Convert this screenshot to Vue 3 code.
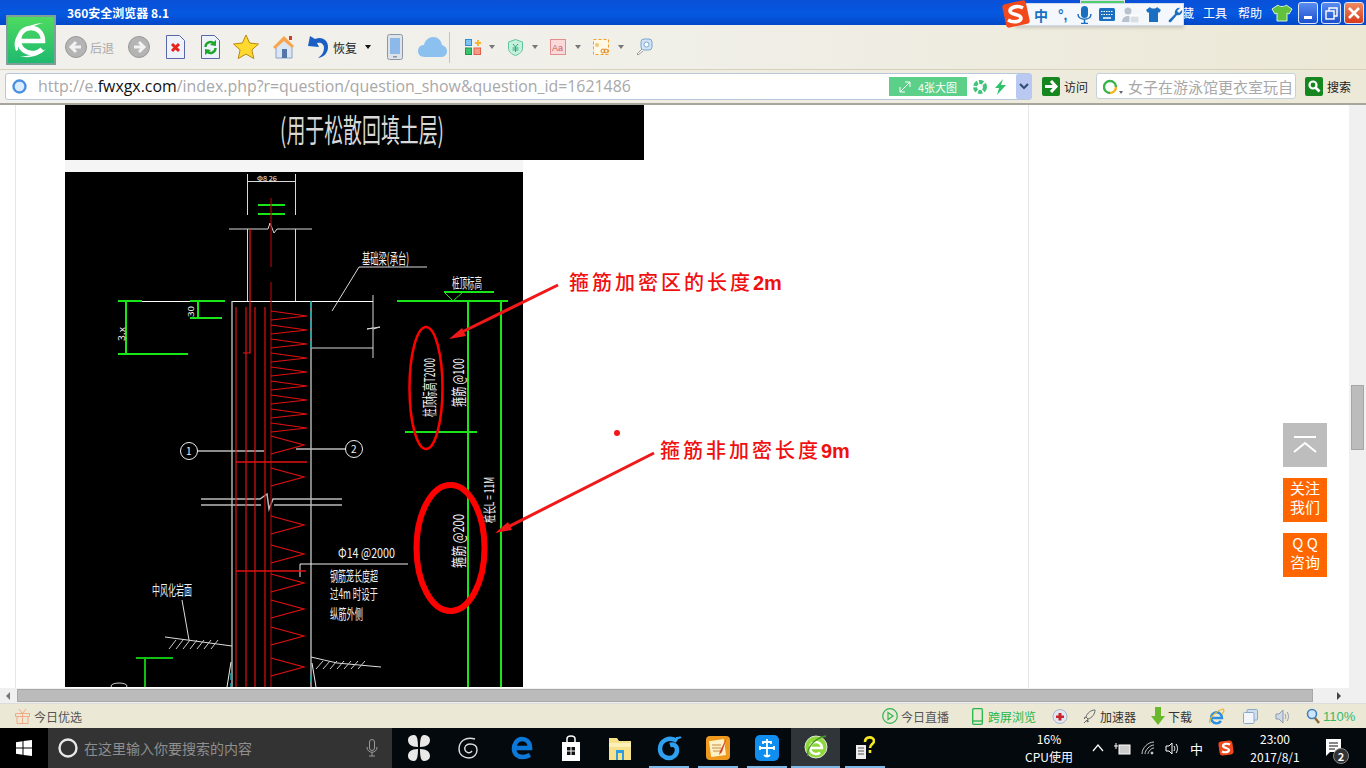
<template>
  <div class="screen">
    <!-- title bar -->
    <div class="titlebar">
      <span class="app-title">360安全浏览器 8.1</span>
      <div class="title-right">
        <span class="menu">收藏</span>
        <span class="menu">工具</span>
        <span class="menu last">帮助</span>
        <svg class="skin" width="22" height="18" viewBox="0 0 22 18">
          <path d="M7 1 1 5l3 5 2-1v8h10V9l2 1 3-5-6-4c-1 2-7 2-8 0z" fill="#5fc13c" stroke="#dff3d0" />
        </svg>
        <div class="win-btn">
          <svg width="20" height="22" viewBox="0 0 20 22"><rect x="6" y="14" width="8" height="3" fill="#fff" /></svg>
        </div>
        <div class="win-btn">
          <svg width="20" height="22" viewBox="0 0 20 22" fill="none" stroke="#fff" stroke-width="1.4"><rect x="5" y="9" width="8" height="8" /><path d="M8 9V6h8v8h-3" /></svg>
        </div>
        <div class="win-btn close">
          <svg width="20" height="22" viewBox="0 0 20 22" stroke="#fff" stroke-width="2.6"><path d="m5 6 10 10M15 6 5 16" /></svg>
        </div>
      </div>
    </div>

    <!-- toolbar -->
    <div class="toolbar">
      <svg class="back" width="22" height="24" viewBox="0 0 22 24">
        <circle cx="11" cy="12" r="10.5" fill="#b4b4b4" stroke="#989898" />
        <path d="M16 12H7m4-5-5 5 5 5" fill="none" stroke="#f2f2f2" stroke-width="3" />
      </svg>
      <span class="back-label">后退</span>
      <svg class="fwd" width="22" height="24" viewBox="0 0 22 24">
        <circle cx="11" cy="12" r="10.5" fill="#b4b4b4" stroke="#989898" />
        <path d="M6 12h9m-4-5 5 5-5 5" fill="none" stroke="#f2f2f2" stroke-width="3" />
      </svg>
      <svg class="doc-stop" width="19" height="24" viewBox="0 0 19 24">
        <path d="M.5.5h13l5 5v18H.5z" fill="#eef2fb" stroke="#5a66a8" />
        <path d="m6 9 7 7m0-7-7 7" stroke="#e8231a" stroke-width="3" />
      </svg>
      <svg class="doc-refresh" width="19" height="24" viewBox="0 0 19 24">
        <path d="M.5.5h13l5 5v18H.5z" fill="#eef2fb" stroke="#5a66a8" />
        <path d="M4.500 12a5 5 0 0 1 8.500-3.500M14.500 13a5 5 0 0 1-8.500 3.500" fill="none" stroke="#1fa52a" stroke-width="2.400" />
        <path d="m15 5 0 6-6-1zM4 20l0-6 6 1z" fill="#1fa52a" />
      </svg>
      <svg class="star" width="26" height="26" viewBox="0 0 26 26">
        <path d="m13 1 3.6 8 8.9 1-6.6 5.9 1.9 8.7L13 20.100l-7.800 4.500 1.900-8.700L.5 10l8.900-1z" fill="#ffd92e" stroke="#b98a12" />
      </svg>
      <svg class="home" width="24" height="24" viewBox="0 0 24 24">
        <path d="M4 11v12h16V11l-8-7z" fill="#dbe6f5" stroke="#8aa2c6" />
        <path d="M1 12 12 1l10 10-2 2-8-7-9 8z" fill="#f6a54a" />
        <rect x="10" y="14" width="5" height="9" fill="#5577a8" />
        <rect x="17" y="1" width="3" height="4" fill="#c8402a" />
      </svg>
      <svg class="undo" width="22" height="24" viewBox="0 0 22 24">
        <path d="M8 4c7-3 13 1 13 8 0 6-4 10-10 11 4-3 6-6 6-10 0-4-3-6-7-5l2 4L1 11l2-10z" fill="#1b5fc4" />
      </svg>
      <span class="tool-label">恢复</span>
      <i class="caret dark"></i>
      <svg class="phone" width="16" height="26" viewBox="0 0 16 26">
        <rect x=".5" y=".5" width="15" height="25" rx="2" fill="#dfe3e8" stroke="#8a97a6" />
        <rect x="3" y="4" width="10" height="16" fill="#8db8ea" />
        <rect x="6" y="22" width="4" height="1.500" fill="#8a97a6" />
      </svg>
      <svg class="cloud" width="29" height="22" viewBox="0 0 29 22">
        <path d="M7 21C2 21 0 18 0 15c0-4 3-6 6-6 1-5 5-8 9-8 5 0 8 3 9 8 3 1 5 3 5 6 0 4-3 6-6 6z" fill="#8cc0ef" />
      </svg>
      <i class="tool-sep"></i>
      <svg class="apps" width="16" height="16" viewBox="0 0 16 16">
        <rect x=".5" y=".5" width="6" height="6" fill="#7cc4f5" stroke="#2e8ed8" />
        <rect x=".5" y="9" width="6" height="6.500" fill="#39c46a" stroke="#1d9a4a" />
        <rect x="9" y="9" width="6.500" height="6.500" fill="#f79a88" stroke="#e0604a" />
        <path d="M10 3h2V1h2v2h2v2h-2v2h-2V5h-2z" fill="#f5b62d" />
      </svg>
      <i class="caret c-apps"></i>
      <svg class="shield" width="15" height="17" viewBox="0 0 15 17">
        <path d="M7.500.5 14.500 3v6c0 4-3 6-7 7.500C3.500 15 .5 13 .5 9V3z" fill="#c4f0dc" stroke="#5fc49a" />
        <path d="m5 5 2.500 3L10 5M4.500 9h6M4.500 11h6M7.500 8v5" fill="none" stroke="#2ea873" />
      </svg>
      <i class="caret c-next"></i>
      <svg class="fontbox" width="16" height="16" viewBox="0 0 16 16">
        <rect x=".5" y=".5" width="15" height="15" fill="#fbd9d9" stroke="#e48f8f" />
        <text x="2" y="12" font-size="9" fill="#c8605f" font-family="Liberation Sans, sans-serif">Aa</text>
      </svg>
      <i class="caret c-next"></i>
      <svg class="shot" width="16" height="16" viewBox="0 0 16 16">
        <rect x=".5" y=".5" width="15" height="15" fill="#fff8e4" stroke="#f0a030" stroke-dasharray="3 2" />
        <circle cx="4" cy="6" r="2" fill="#f2c777" />
        <circle cx="10" cy="12" r="2" fill="none" stroke="#d8841e" />
        <circle cx="13" cy="12" r="2" fill="none" stroke="#d8841e" />
      </svg>
      <i class="caret c-next"></i>
      <svg class="lens" width="17" height="18" viewBox="0 0 17 18">
        <rect x="5" y="1" width="11" height="11" rx="3" fill="#cfe3f5" stroke="#7da6cc" />
        <circle cx="10.500" cy="6.500" r="2.500" fill="#fff" stroke="#7da6cc" />
        <path d="m6 11-5 5 1 1 5-4" fill="#fff" stroke="#999" />
      </svg>
    </div>

    <!-- address bar -->
    <div class="addressbar">
      <div class="url-box">
        <svg class="globe" width="15" height="15" viewBox="0 0 15 15">
          <circle cx="7.500" cy="7.500" r="6" fill="#dcecff" stroke="#4a90e2" stroke-width="2.400" />
        </svg>
        <span class="url">http://e.<b>fwxgx.com</b>/index.php?r=question/question_show&amp;question_id=1621486</span>
        <div class="big-pic">
          <svg width="12" height="12" viewBox="0 0 12 12" fill="none" stroke="#fff"><path d="M1 11 11 1M6 1h5v5M1 6v5h5" /></svg>
          <span>4张大图</span>
        </div>
        <svg class="shutter" width="14" height="14" viewBox="0 0 14 14">
          <circle cx="7" cy="7" r="5" fill="none" stroke="#3fc47a" stroke-width="4" stroke-dasharray="4 1.500" />
        </svg>
        <svg class="bolt" width="13" height="16" viewBox="0 0 13 16"><path d="M9 0 1 9h4l-2 7 9-10H7z" fill="#2ec36a" /></svg>
        <div class="url-drop">
          <svg width="10" height="8" viewBox="0 0 10 8"><path d="m1 1 4 4 4-4" fill="none" stroke="#33507a" stroke-width="2.200" /></svg>
        </div>
      </div>
      <svg class="go" width="18" height="19" viewBox="0 0 18 19">
        <rect width="18" height="19" rx="2" fill="#16861f" />
        <path d="M3 9.500h10M9 4l5 5.500L9 15" fill="none" stroke="#fff" stroke-width="3" />
      </svg>
      <span class="addr-label">访问</span>
      <div class="search-box">
        <svg width="22" height="18" viewBox="0 0 22 18">
          <path d="M7 16a6 6 0 1 1 6-6" fill="none" stroke="#37b54a" stroke-width="2.400" />
          <path d="M13 10a6 6 0 0 1-6 6" fill="none" stroke="#f5b51e" stroke-width="2.400" />
          <path d="m16 14 4 0-2 3z" fill="#666" />
        </svg>
        <span class="search-text">女子在游泳馆更衣室玩自</span>
      </div>
      <svg class="search-go" width="18" height="19" viewBox="0 0 18 19">
        <rect width="18" height="19" rx="2" fill="#16861f" />
        <circle cx="8" cy="8" r="3.500" fill="none" stroke="#fff" stroke-width="2.200" />
        <path d="m10.500 10.500 4 4" stroke="#fff" stroke-width="2.600" />
      </svg>
      <span class="addr-label">搜索</span>
    </div>

    <!-- page -->
    <div class="viewport">
      <div class="page">
        <div class="sheet">
          <div class="band">
            <svg width="579" height="55" viewBox="65 105 579 55">
              <text x="280" y="142" class="band-title" textLength="164" lengthAdjust="spacingAndGlyphs">(用于松散回填土层)</text>
            </svg>
          </div>
          <div class="gap-strip"></div>
          <svg class="drawing" width="800" height="515" viewBox="65 172 800 515">
            <rect x="65" y="172" width="458" height="515" fill="#000" />

            <!-- column above the cap -->
            <g fill="none" stroke="#d8d8d8" stroke-width="1">
              <path d="M247 174v41M295 174v41M247 181h48" shape-rendering="crispEdges" />
              <path d="M229 229h39l2-6 4 10 3-4h35" />
              <path d="M247 229v72M295 229v72" shape-rendering="crispEdges" />
              <path d="M142 301h83M232 301h141" stroke="#fff" shape-rendering="crispEdges" />
              <path d="M373 295v33l-6 1 13-2-7 2v29M311 348h62" />
              <path d="M232 301v386M311 301v386" stroke="#c8c8c8" stroke-width="1.300" />
              <path d="M359 267h68M359 267l-27 44" />
              <path d="M201 499h59l7-5 2 15 4-10h69M201 505h60M274 505h68" stroke="#bbb" stroke-width="1.500" />
              <path d="M197 451h67M296 449h50" stroke="#bbb" stroke-width="1.500" />
              <circle cx="189" cy="451" r="8.500" stroke="#eee" />
              <circle cx="354" cy="449" r="8.500" stroke="#eee" />
              <path d="M300 577v-13h108" stroke="#eee" />
              <path d="m182 600 7 40M165 637l67 9M311 657l26 6 44 4" stroke="#ddd" />
              <path d="m231 662-4 25M312 663l4 24" stroke="#eee" />
              <ellipse cx="119" cy="686" rx="8" ry="3" stroke="#ccc" />
            </g>
            <path v-for="(h, i) in hatches" :key="'h' + i" :d="h" stroke="#ccc" stroke-width="1" />
            <path d="M311 301v47M231 673v14M311 675v10" stroke="#1aa" stroke-width="1.500" stroke-dasharray="7 3" fill="none" />

            <!-- green dimensions -->
            <g fill="none" stroke="#19e619" stroke-width="1.500" shape-rendering="crispEdges">
              <path d="M258 205h27M258 214h27" />
              <path d="M118 301h24M126 301v53M118 354h70M198 301v17M190 318h32M190 301h35" />
              <path d="M397 301h111M444 292h50" />
              <path d="M468 301v386M501 301v386M405 432h72" />
              <path d="M136 658h37M145 658v29" stroke="#10c010" />
            </g>
            <path d="m444 292 9 9 10-9" fill="none" stroke="#19e619" />

            <!-- rebar -->
            <g fill="none" stroke="#e01010" stroke-width="1.200">
              <path d="M250 229v124h-7" stroke="#f01818" />
              <path d="M236 307v380M246 307v380M255 307v380M265 307v380" />
              <path d="M271 198v69M271 282v405" stroke="#a00808" />
              <path d="M236 462h71M236 571h70" stroke-width="1.500" />
              <polyline v-for="(p, i) in dense" :key="'d' + i" :points="p" />
              <polyline v-for="(p, i) in sparse" :key="'s' + i" :points="p" />
            </g>

            <!-- drawing notes -->
            <g class="cad">
              <text x="257" y="181" font-size="7" textLength="20" lengthAdjust="spacingAndGlyphs">Φ8 26</text>
              <text x="362" y="264" font-size="15" textLength="47" lengthAdjust="spacingAndGlyphs">基础梁(承台)</text>
              <text x="452" y="288" font-size="14" textLength="30" lengthAdjust="spacingAndGlyphs">桩顶标高</text>
              <text x="338" y="558" font-size="14" textLength="57" lengthAdjust="spacingAndGlyphs">Φ14 @2000</text>
              <text x="330" y="581" font-size="14" textLength="48" lengthAdjust="spacingAndGlyphs">钢筋笼长度超</text>
              <text x="330" y="599" font-size="14" textLength="48" lengthAdjust="spacingAndGlyphs">过4m 时设于</text>
              <text x="330" y="619" font-size="14" textLength="33" lengthAdjust="spacingAndGlyphs">纵筋外侧</text>
              <text x="152" y="595" font-size="14" textLength="40" lengthAdjust="spacingAndGlyphs">中风化岩面</text>
              <text x="186" y="455" font-size="10">1</text>
              <text x="351" y="453" font-size="10">2</text>
              <text transform="translate(194 317) rotate(-90)" font-size="8" textLength="11" lengthAdjust="spacingAndGlyphs">30</text>
              <text transform="translate(125 341) rotate(-90)" font-size="9" textLength="14" lengthAdjust="spacingAndGlyphs">3.x</text>
              <text transform="translate(435 417) rotate(-90)" font-size="15" textLength="59" lengthAdjust="spacingAndGlyphs">桩顶标高T2000</text>
              <text transform="translate(464 407) rotate(-90)" font-size="15" textLength="49" lengthAdjust="spacingAndGlyphs">箍筋 @100</text>
              <text transform="translate(464 568) rotate(-90)" font-size="15" textLength="54" lengthAdjust="spacingAndGlyphs">箍筋 @200</text>
              <text transform="translate(494 523) rotate(-90)" font-size="13" textLength="46" lengthAdjust="spacingAndGlyphs">桩长L = 11M</text>
            </g>

            <!-- red markup on the drawing -->
            <ellipse cx="426" cy="388" rx="16.500" ry="61" fill="none" stroke="#f00" stroke-width="2.500" />
            <ellipse cx="450.500" cy="548" rx="34" ry="63" fill="none" stroke="#f00" stroke-width="6" />
            <path d="m558 285-100 49" stroke="#f01818" stroke-width="3" />
            <path d="m449 339 13-11 4 8z" fill="#f01818" />
            <path d="m654 453-148 75" stroke="#f01818" stroke-width="3" />
            <path d="m495 533 13-11 4 8z" fill="#f01818" />
            <circle cx="617" cy="433" r="3" fill="#f01818" />
            <text x="569" y="290" class="note">箍筋加密区的长度<tspan class="note-num">2m</tspan></text>
            <text x="660" y="458" class="note">箍筋非加密长度<tspan class="note-num">9m</tspan></text>
          </svg>
        </div>
      </div>
      <div class="v-scroll"><div class="v-thumb"></div></div>

      <div class="float-tools">
        <div class="to-top">
          <svg width="44" height="44" viewBox="0 0 44 44" fill="none" stroke="#fff" stroke-width="2">
            <path d="M11 14h22M11 29l11-9 11 9" />
          </svg>
        </div>
        <div class="float-btn">关注<br />我们</div>
        <div class="float-btn">Q Q<br />咨询</div>
      </div>
    </div>

    <!-- horizontal scrollbar -->
    <div class="h-scroll">
      <i class="arrow-left"></i>
      <div class="h-thumb"></div>
      <i class="arrow-right"></i>
    </div>

    <!-- status bar -->
    <div class="statusbar">
      <svg class="gift" width="15" height="16" viewBox="0 0 15 16" fill="none" stroke="#f3a983">
        <path d="M.5 5.500h14v3H.5zM2 8.500h11v7H2zM7.500 5.500v10M7.500 5.500 4 1M7.500 5.500 11 1" />
      </svg>
      <span class="st-label first">今日优选</span>
      <div class="st-right">
        <svg width="16" height="16" viewBox="0 0 16 16" fill="none" stroke="#2fb553" stroke-width="1.200">
          <circle cx="8" cy="8" r="7.300" /><path d="m6 4.500 5 3.500-5 3.500z" />
        </svg>
        <span class="st-label live">今日直播</span>
        <svg class="st-phone" width="11" height="17" viewBox="0 0 11 17" fill="none" stroke="#22b84a" stroke-width="1.300">
          <rect x=".7" y=".7" width="9.600" height="15.600" rx="1" /><path d="M.7 13h9.600" />
        </svg>
        <span class="st-label cross">跨屏浏览</span>
        <svg class="st-med" width="16" height="17" viewBox="0 0 16 17">
          <circle cx="8" cy="8.500" r="7" fill="#e2e8f2" stroke="#a8b4cc" />
          <path d="M6.500 5h3v2.500H12v2.500H9.500v2.500h-3V10H4V7.500h2.500z" fill="#c8262a" />
        </svg>
        <svg class="st-rocket" width="13" height="15" viewBox="0 0 13 15" fill="none" stroke="#666">
          <path d="M12 1C8 1 4 4 3 8l2 2c4-1 7-5 7-9zM3 8 1 9l1 1M5 10l-1 3 2-1M1 14l3-3" />
        </svg>
        <span class="st-label speed">加速器</span>
        <svg class="st-down" width="14" height="18" viewBox="0 0 14 18"><path d="M4 0h6v9h4l-7 9-7-9h4z" fill="#6ab82c" /></svg>
        <span class="st-label dl">下载</span>
        <svg class="st-ie" width="17" height="17" viewBox="0 0 17 17">
          <path d="M3 10h11a5.500 5.500 0 1 0-1 3" fill="none" stroke="#2a8fe0" stroke-width="2.400" />
          <path d="M2 15C0 12 7 3 15 1c2 1 0 4-1 5" fill="none" stroke="#f0b72c" stroke-width="1.200" />
        </svg>
        <svg class="st-win" width="15" height="15" viewBox="0 0 15 15">
          <rect x="4" y=".5" width="10.500" height="10.500" rx="1" fill="#d0dff0" stroke="#8aa8c8" />
          <rect x=".5" y="3.500" width="10.500" height="11" rx="1" fill="#f2f6fb" stroke="#8aa8c8" />
        </svg>
        <svg class="st-spk" width="15" height="15" viewBox="0 0 15 15" fill="none">
          <path d="M1 5h3l4-4v13l-4-4H1z" fill="#cfd8e4" stroke="#8b9bb0" />
          <path d="M10 5c1 2 1 3 0 5M12 3c2 3 2 6 0 9" stroke="#8b9bb0" />
        </svg>
        <svg class="st-zoom" width="14" height="16" viewBox="0 0 14 16">
          <circle cx="6" cy="6" r="4.500" fill="#cfe5fa" stroke="#3e7fc4" stroke-width="1.600" />
          <path d="m9 10 4 5" stroke="#8a6a3e" stroke-width="2.400" />
        </svg>
        <span class="st-pct">110%</span>
      </div>
    </div>

    <!-- taskbar -->
    <div class="taskbar">
      <div class="start">
        <svg width="16" height="16" viewBox="0 0 16 16" fill="#fff">
          <path d="M0 2.200 6.500 1.300v6.200H0zM7.500 1.100 16 0v7.500H7.500zM0 8.500h6.500v6.200L0 13.800zM7.500 8.500H16V16l-8.500-1.100z" />
        </svg>
      </div>
      <div class="cortana">
        <svg width="22" height="22" viewBox="0 0 22 22"><circle cx="11" cy="11" r="8.500" fill="none" stroke="#e8e8e8" stroke-width="2.400" /></svg>
        <span class="cortana-text">在这里输入你要搜索的内容</span>
        <svg class="mic" width="12" height="18" viewBox="0 0 12 18" fill="none" stroke="#999">
          <rect x="3.500" y=".5" width="5" height="11" rx="2.500" /><path d="M1 8c0 7 10 7 10 0M6 13v4M3 17h6" />
        </svg>
      </div>
      <div class="task-icons">
        <div class="task-item">
          <svg width="22" height="26" viewBox="0 0 22 26" fill="#e8e8e8">
            <path d="M10 12C3 12 0 9 0 5s4-5 6-5c3 0 4 4 4 12zM12 12c0-8 1-12 4-12 2 0 6 1 6 5s-3 7-10 7zM10 14c0 8-1 12-4 12-2 0-6-1-6-5s3-7 10-7zM12 14c7 0 10 3 10 7s-4 5-6 5c-3 0-4-4-4-12z" />
          </svg>
        </div>
        <div class="task-item spaced">
          <svg width="22" height="24" viewBox="0 0 22 24" fill="none" stroke="#ddd" stroke-width="1.400">
            <path d="M18 3C8 0 2 6 2 13c0 6 5 9 10 9s8-4 8-8-3-6-7-6-6 3-5 6 5 4 7 1" />
          </svg>
        </div>
        <div class="task-item">
          <svg width="22" height="24" viewBox="0 0 22 24" fill="none" stroke="#0c78d8" stroke-width="4.600">
            <path d="M4 12h15C19 6 15 3 11 3 6 3 3 8 3 13s4 8 9 8c3 0 5-1 7-2" />
          </svg>
        </div>
        <div class="task-item">
          <svg width="20" height="26" viewBox="0 0 20 26">
            <path d="M1 7h18v19H1z" fill="#fff" />
            <path d="M6 8V4c0-4 8-4 8 0v4" fill="none" stroke="#fff" stroke-width="1.500" />
            <path d="M6 12h3.500v3.500H6zm4.500 0H14v3.500h-3.500zM6 16.500h3.500V20H6zm4.500 0H14V20h-3.500z" fill="#111" />
          </svg>
        </div>
        <div class="task-item">
          <svg width="22" height="24" viewBox="0 0 22 24">
            <path d="M0 2h8l2 3h12v19H0z" fill="#f7e08a" />
            <rect y="7" width="22" height="4" fill="#fdf0b8" />
            <path d="M7 14h8v10H7z" fill="#2f9be0" />
            <rect x="9" y="17" width="4" height="7" fill="#f7e08a" />
          </svg>
        </div>
        <div class="task-item running">
          <svg width="26" height="26" viewBox="0 0 26 26" fill="none" stroke="#2f9ff0" stroke-width="4.500">
            <path d="M21 6C14 1 4 5 4 14c0 6 5 9 9 9s8-3 8-8-4-6-7-5" />
            <path d="M20 3c2 0 4 0 5-1" stroke-width="2" />
          </svg>
        </div>
        <div class="task-item running">
          <svg width="24" height="24" viewBox="0 0 24 24">
            <rect width="24" height="24" rx="4" fill="#ef9a1f" />
            <rect x="4" y="4" width="15" height="16" fill="#fdf1c8" transform="rotate(-8 12 12)" />
            <path d="M6 9h9M6 12h9M7 15h7" stroke="#c98a3a" />
            <path d="m21 1-7 14-1 4 3-3z" fill="#d8442a" />
          </svg>
        </div>
        <div class="task-item running">
          <svg width="24" height="26" viewBox="0 0 24 26">
            <rect width="24" height="26" rx="5" fill="#0f8ef0" />
            <path d="M12 4v18M8 9V7h8v2M5 13h14M5 11v4M19 11v4M9 20c2 2 4 2 6 0" fill="none" stroke="#fff" stroke-width="1.800" />
          </svg>
        </div>
        <div class="task-item active">
          <svg width="24" height="24" viewBox="0 0 24 24">
            <circle cx="12" cy="12" r="11" fill="#8fd83c" stroke="#dfe8d8" />
            <path d="M6 13h12a6 6 0 1 0-2 4.500" fill="none" stroke="#fff" stroke-width="2.400" />
            <path d="M4 21C2 14 10 3 22 1" fill="none" stroke="#4a9a1e" stroke-width="1.400" />
          </svg>
        </div>
        <div class="task-item running">
          <svg width="20" height="24" viewBox="0 0 20 24">
            <rect x="1" y="9" width="10" height="14" fill="#eee" />
            <path d="M3 12h6M3 15h6M3 18h6" stroke="#555" />
            <path d="M10 6c0-6 9-6 9-1 0 3-4 3-4 7M15 14v3" fill="none" stroke="#f5e81e" stroke-width="2.600" />
          </svg>
        </div>
      </div>
      <div class="cpu">
        <span>16%</span>
        <span>CPU使用</span>
      </div>
      <div class="tray">
        <svg class="t-up" width="12" height="8" viewBox="0 0 12 8"><path d="m1 7 5-6 5 6" fill="none" stroke="#fff" stroke-width="1.200" /></svg>
        <svg class="t-bat" width="17" height="13" viewBox="0 0 17 13" fill="none" stroke="#fff">
          <rect x="5" y="3" width="11" height="9" fill="#ccc" /><path d="M0 4h4M2 1v6" />
        </svg>
        <svg class="t-wifi" width="14" height="14" viewBox="0 0 14 14" fill="none" stroke="#ccc">
          <path d="M1 13C1 7 7 1 13 1M4 13c0-4 5-9 9-9M7 13c0-2 3-6 6-6" /><circle cx="11" cy="12" r="1" fill="#fff" />
        </svg>
        <svg class="t-spk" width="15" height="15" viewBox="0 0 15 15" fill="none" stroke="#fff">
          <path d="M1 5h3l3-3v11l-3-3H1zM9 5c1 2 1 3 0 5M11 3c2 3 2 6 0 9" />
        </svg>
        <span class="t-ime">中</span>
        <svg class="t-s" width="16" height="16" viewBox="0 0 16 16">
          <rect x="1" y="1" width="14" height="14" rx="3" fill="#f2491c" transform="rotate(-8 8 8)" />
          <path d="M12 4.500C9 3 5 4 5 6s6 2 6 4-4 3-7 1.500" fill="none" stroke="#fff" stroke-width="2.200" />
        </svg>
      </div>
      <div class="clock">
        <span>23:00</span>
        <span>2017/8/1</span>
      </div>
      <div class="notify">
        <svg width="20" height="20" viewBox="0 0 20 20">
          <path d="M1 1h15v13H5l-4 4z" fill="#fff" />
          <path d="M4 5h9M4 8h9M4 11h6" stroke="#111" />
        </svg>
        <span class="badge">2</span>
      </div>
    </div>

    <!-- overlays across the chrome -->
    <svg class="logo" width="50" height="50" viewBox="0 0 50 50">
      <defs>
        <linearGradient id="logoBg" x1="0" y1="0" x2="0" y2="1">
          <stop offset="0" stop-color="#4edb60" />
          <stop offset="1" stop-color="#1fb96f" />
        </linearGradient>
      </defs>
      <rect x="1" y="1" width="48" height="48" fill="url(#logoBg)" stroke="#7f9f9a" stroke-width="2" />
      <path d="M13 26h24c0-8-5-13-12-13s-12 5-12 12c0 8 6 13 13 13 4 0 7-1 10-4" fill="none" stroke="#fff" stroke-width="4.500" />
      <path d="M10 36C4 20 20 8 39 8 27 9 12 19 12 31c0 3 1 4-2 5zM14 41c8 3 20 0 26-7-6 4-18 8-26 7z" fill="#fff" />
    </svg>
    <div class="ime-tab"></div>
    <div class="ime">
      <span class="ime-cn">中</span>
      <span class="ime-punct">°,</span>
      <svg width="15" height="18" viewBox="0 0 15 18" fill="#1a6fc0">
        <rect x="4" y="0" width="7" height="12" rx="3.500" /><path d="M1 8c0 7 13 7 13 0M7.500 14v3M4 17.500h7" fill="none" stroke="#1a6fc0" stroke-width="1.500" />
      </svg>
      <svg width="16" height="13" viewBox="0 0 16 13">
        <rect width="16" height="13" rx="1.500" fill="#1a6fc0" />
        <path d="M2 3.500h12M2 6.500h12" stroke="#fff" stroke-dasharray="1.500 1" /><path d="M4 10h8" stroke="#fff" stroke-width="1.500" />
      </svg>
      <svg width="17" height="16" viewBox="0 0 17 16" fill="#b8c2cc">
        <circle cx="6" cy="4" r="3.500" /><path d="M0 15c0-8 12-8 12 0z" />
        <rect x="8" y="9" width="9" height="7" fill="#d8dee4" stroke="#fff" />
      </svg>
      <svg width="15" height="15" viewBox="0 0 15 15" fill="#1a6fc0">
        <path d="M4 0 0 3l2 3 1-1v10h9V5l1 1 2-3-4-3c-1 2-6 2-7 0z" />
      </svg>
      <svg width="15" height="16" viewBox="0 0 15 16" fill="#1a6fc0">
        <path d="M14 3c1 3-2 6-5 5L3 15c-2 1-3-1-2-2l6-6C6 4 9 0 12 1L9 4l2 2z" />
      </svg>
    </div>
    <svg class="ime-logo" width="28" height="28" viewBox="0 0 28 28">
      <rect x="2" y="2" width="24" height="24" rx="3" fill="#f2491c" transform="rotate(-12 14 14)" />
      <path d="M21 8C16 5 8 7 8 11s11 3 11 7-8 5-13 2" fill="none" stroke="#fff" stroke-width="3.600" />
    </svg>
  </div>
</template>

<script setup>
// zigzag stirrups: tight near the cap, wider below it
const dense = []
for (let y = 311; y <= 423; y += 14) {
  dense.push(`271,${y} 307,${y + 5} 271,${y + 9}`)
}
const sparse = [436, 468, 516, 545, 574, 600, 627, 658].map(
  (y) => `271,${y} 304,${y + 9} 271,${y + 18}`
)

const hatches = []
for (let x = 176; x < 222; x += 7) hatches.push(`M${x} 640l-7 9`)
for (let x = 323; x < 370; x += 7) hatches.push(`M${x} 661l-7 8`)
</script>

<style scoped>
.screen {
  position: relative;
  width: 1366px;
  height: 768px;
  overflow: hidden;
  font-family: "Noto Sans CJK SC", "Liberation Sans", sans-serif;
  background: #fff;
}
svg {
  display: block;
  flex: none;
}

.titlebar {
  height: 25px;
  display: flex;
  align-items: center;
  justify-content: space-between;
  padding-left: 67px;
  background: linear-gradient(#0a50d8, #0558e0 55%, #0248c8);
  color: #fff;
}
.app-title {
  font-size: 12px;
  font-weight: 700;
}
.title-right {
  display: flex;
  align-items: center;
  padding-right: 2px;
}
.menu {
  font-size: 12px;
  margin-right: 11px;
}
.menu:first-child {
  margin-right: 9px;
}
.menu.last {
  margin-right: 9px;
}
.skin {
  margin-right: 2px;
}
.win-btn {
  width: 20px;
  height: 22px;
  margin-left: 3px;
  border: 1px solid #dce8fa;
  border-radius: 3px;
  background: linear-gradient(#5a8cf0, #1c50cc);
  box-sizing: border-box;
  display: flex;
  align-items: center;
  justify-content: center;
}
.win-btn svg {
  margin: -1px;
}
.win-btn.close {
  background: linear-gradient(#ef8a60, #d83a1a);
}

.toolbar {
  height: 45px;
  display: flex;
  align-items: center;
  padding-left: 65px;
  background: linear-gradient(90deg, #f1f0ec, #f0efe8 50%, #ece8d6);
  border-bottom: 1px solid #d8d0b8;
  box-sizing: border-box;
}
.back-label {
  margin-left: 3px;
  font-size: 12px;
  color: #aaa;
}
.fwd { margin-left: 14px; }
.doc-stop { margin-left: 16px; }
.doc-refresh { margin-left: 16px; }
.star { margin-left: 13px; }
.home { margin-left: 13px; }
.undo { margin-left: 11px; }
.tool-label {
  margin-left: 4px;
  font-size: 12px;
  color: #222;
}
.caret {
  width: 0;
  height: 0;
  border-left: 3px solid transparent;
  border-right: 3px solid transparent;
  border-top: 4px solid #777;
}
.caret.dark {
  margin-left: 8px;
  border-top-color: #111;
}
.phone { margin-left: 16px; }
.cloud { margin-left: 15px; }
.tool-sep {
  width: 1px;
  height: 31px;
  margin-left: 2px;
  background: #c8c4b0;
}
.apps { margin-left: 15px; }
.c-apps { margin-left: 8px; }
.shield { margin-left: 13px; }
.c-next { margin-left: 9px; }
.fontbox { margin-left: 12px; }
.shot { margin-left: 12px; }
.lens { margin-left: 12px; }

.addressbar {
  height: 35px;
  display: flex;
  align-items: flex-start;
  padding: 3px 0 0 5px;
  box-sizing: border-box;
  background: linear-gradient(90deg, #f2f1ee, #ece9d8);
  border-bottom: 2px solid #a8a69a;
}
.url-box {
  width: 1027px;
  height: 27px;
  display: flex;
  align-items: center;
  box-sizing: border-box;
  padding-left: 6px;
  background: #fff;
  border: 1px solid #b8c8d8;
  border-radius: 3px;
}
.url {
  margin: -2px 0 0 11px;
  width: 851px;
  flex: none;
  font-family: "Open Sans", "Liberation Sans", sans-serif;
  font-size: 15.9px;
  color: #a8a8a8;
  white-space: nowrap;
}
.url b {
  font-weight: 400;
  color: #111;
}
.big-pic {
  width: 78px;
  height: 19px;
  flex: none;
  display: flex;
  align-items: center;
  justify-content: center;
  gap: 7px;
  background: #5ccf88;
  color: #fff;
  font-size: 11px;
}
.shutter { margin-left: 6px; }
.bolt { margin-left: 7px; }
.url-drop {
  width: 16px;
  height: 25px;
  margin-left: 9px;
  display: flex;
  align-items: center;
  justify-content: center;
  background: #b9c9f2;
  border-radius: 2px;
  flex: none;
}
.go {
  margin: 4px 0 0 10px;
}
.addr-label {
  margin: 5px 0 0 4px;
  font-size: 12px;
  color: #222;
}
.search-box {
  width: 200px;
  height: 26px;
  margin-left: 8px;
  box-sizing: border-box;
  display: flex;
  align-items: center;
  padding-left: 6px;
  background: #fff;
  border: 1px solid #c4d0dc;
  border-radius: 3px;
}
.search-text {
  margin-left: 3px;
  font-size: 15px;
  color: #a8a8a8;
  white-space: nowrap;
}
.search-go {
  margin: 4px 0 0 9px;
}

.viewport {
  position: relative;
  height: 583px;
  display: flex;
}
.page {
  width: 1349px;
  height: 583px;
  overflow: hidden;
  background: #fff;
  flex: none;
}
.sheet {
  width: 1014px;
  height: 583px;
  margin-left: 15px;
  box-sizing: border-box;
  padding-left: 49px;
  border-left: 1px solid #e6e6e6;
  border-right: 1px solid #e6e6e6;
}
.band {
  width: 579px;
  height: 55px;
  background: #000;
}
.band-title {
  font-size: 32px;
  fill: #d8d8d8;
}
.gap-strip {
  width: 458px;
  height: 12px;
  background: #f5f5f5;
}
.drawing {
  overflow: hidden;
}
.cad text {
  fill: #f0f0f0;
}
.note {
  font-size: 20px;
  font-weight: 500;
  letter-spacing: 3px;
  fill: #f01010;
}
.note-num {
  font-family: "Liberation Sans", sans-serif;
  font-weight: 700;
  letter-spacing: 0;
}
.v-scroll {
  width: 17px;
  background: #f0f0f0;
  padding-top: 280px;
  box-sizing: border-box;
}
.v-thumb {
  width: 13px;
  height: 65px;
  margin-left: 2px;
  box-sizing: border-box;
  background: #bcbcbc;
  border: 1px solid #a6a6a6;
}
.float-tools {
  position: absolute;
  left: 1283px;
  top: 318px;
  display: flex;
  flex-direction: column;
  gap: 11px;
}
.to-top {
  width: 44px;
  height: 44px;
  background: #bdbdbd;
}
.float-btn {
  width: 44px;
  height: 44px;
  background: #f60;
  color: #fff;
  font-size: 15px;
  line-height: 19px;
  box-sizing: border-box;
  text-align: center;
}

.h-scroll {
  height: 16px;
  display: flex;
  align-items: center;
  background: #f0f0f0;
  border-bottom: 1px solid #dcdcdc;
  box-sizing: border-box;
}
.arrow-left {
  width: 0;
  height: 0;
  margin-left: 6px;
  border-top: 4px solid transparent;
  border-bottom: 4px solid transparent;
  border-right: 4px solid #777;
}
.h-thumb {
  width: 1296px;
  height: 13px;
  margin-left: 7px;
  background: #bbb;
  border: 1px solid #a8a8a8;
  box-sizing: border-box;
}
.arrow-right {
  width: 0;
  height: 0;
  margin-left: 24px;
  border-top: 4px solid transparent;
  border-bottom: 4px solid transparent;
  border-left: 4px solid #444;
}

.statusbar {
  height: 24px;
  display: flex;
  align-items: center;
  padding-left: 15px;
  background: #ebe8d6;
}
.st-label {
  font-size: 12px;
  color: #555;
  white-space: nowrap;
}
.st-label.first { margin-left: 4px; }
.st-right {
  display: flex;
  align-items: center;
  margin-left: 800px;
}
.st-label.live { margin-left: 3px; }
.st-phone { margin-left: 23px; }
.st-label.cross {
  margin-left: 5px;
  color: #22b84a;
}
.st-med { margin-left: 16px; }
.st-rocket { margin-left: 15px; }
.st-label.speed { margin-left: 4px; color: #333; }
.st-down { margin-left: 15px; }
.st-label.dl { margin-left: 3px; color: #333; }
.st-ie { margin-left: 16px; }
.st-win { margin-left: 18px; }
.st-spk { margin-left: 17px; }
.st-zoom { margin-left: 16px; }
.st-pct {
  margin-left: 3px;
  font-family: "Liberation Sans", sans-serif;
  font-size: 13px;
  color: #35b968;
}

.taskbar {
  height: 40px;
  display: flex;
  background: #04090d;
  color: #fff;
}
.start {
  width: 48px;
  background: #000;
  display: flex;
  align-items: center;
  justify-content: center;
  flex: none;
}
.cortana {
  width: 344px;
  flex: none;
  display: flex;
  align-items: center;
  padding-left: 9px;
  box-sizing: border-box;
  background: #333;
}
.cortana-text {
  margin-left: 5px;
  font-size: 14px;
  color: #8e8e8e;
  white-space: nowrap;
}
.mic { margin-left: 114px; }
.task-icons {
  display: flex;
  padding-left: 2px;
  width: 581px;
  flex: none;
  box-sizing: border-box;
}
.task-item {
  width: 49px;
  height: 40px;
  flex: none;
  display: flex;
  align-items: center;
  justify-content: center;
  box-sizing: border-box;
}
.task-item.spaced {
  margin-right: 5px;
}
.task-item.running {
  background: linear-gradient(#7db9e8, #7db9e8) center bottom / 40px 2px no-repeat;
}
.task-item.active {
  background: #2f3539;
  border-bottom: 2px solid #7db9e8;
}
.cpu, .clock {
  display: flex;
  flex-direction: column;
  align-items: center;
  justify-content: center;
  font-size: 12px;
  line-height: 18px;
}
.cpu {
  width: 60px;
  flex: none;
  margin-left: 46px;
}
.tray {
  display: flex;
  align-items: center;
  margin-left: 13px;
  width: 148px;
  flex: none;
}
.t-bat { margin-left: 10px; }
.t-wifi { margin-left: 10px; }
.t-spk { margin-left: 10px; }
.t-ime { margin-left: 10px; font-size: 13px; }
.t-s { margin-left: 15px; }
.clock {
  width: 60px;
  flex: none;
  margin-left: 5px;
}
.notify {
  position: relative;
  margin: 10px 0 0 20px;
}
.badge {
  position: absolute;
  left: 8px;
  top: 10px;
  width: 16px;
  height: 16px;
  border-radius: 50%;
  background: #333;
  border: 1px solid #888;
  box-sizing: border-box;
  font-size: 11px;
  line-height: 14px;
  text-align: center;
  font-weight: 700;
}

.logo {
  position: absolute;
  left: 6px;
  top: 15px;
}
.ime-tab {
  position: absolute;
  left: 1080px;
  top: 0;
  width: 45px;
  height: 4px;
  background: #4fcf6a;
  border: 1px solid #dde;
  box-sizing: border-box;
}
.ime {
  position: absolute;
  left: 1015px;
  top: 3px;
  width: 169px;
  height: 23px;
  box-sizing: border-box;
  padding-left: 18px;
  display: flex;
  align-items: center;
  gap: 7px;
  background: #f4f8fc;
  border: 1px solid #cfdcec;
  box-shadow: 0 2px 3px rgba(0, 0, 0, 0.15);
  color: #1a6fc0;
}
.ime-cn {
  font-size: 14px;
  font-weight: 700;
}
.ime-punct {
  width: 18px;
  font-size: 14px;
  font-weight: 700;
  font-family: "Liberation Sans", sans-serif;
  margin-left: 3px;
}
.ime-logo {
  position: absolute;
  left: 1002px;
  top: 0;
}
</style>
